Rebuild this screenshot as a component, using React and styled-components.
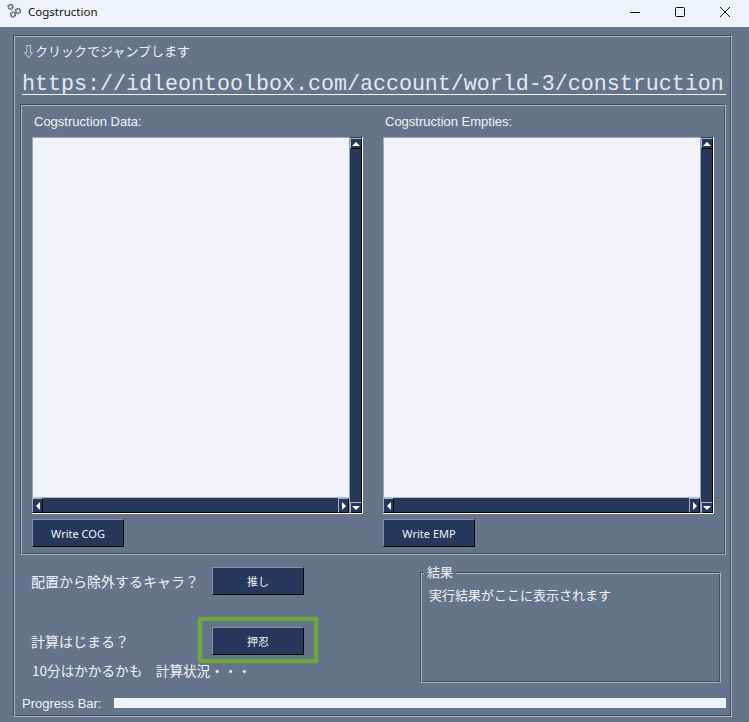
import styled, { createGlobalStyle } from "styled-components";

const SLATE = "#64758b";
const NAVY = "#25375a";
const PAPER = "#f1f3f9";
const EDGE_DARK = "#3f4c5e";
const EDGE_LIGHT = "#a9b3c1";

const GlobalStyle = createGlobalStyle`
  html, body {
    margin: 0;
    padding: 0;
    height: 100%;
    overflow: hidden;
  }
  #root {
    height: 100%;
  }
  * {
    box-sizing: border-box;
  }
`;

const Window = styled.div`
  display: flex;
  flex-direction: column;
  width: 749px;
  height: 722px;
  background: ${SLATE};
  color: ${PAPER};
  font-family: "Noto Sans CJK JP", "Noto Sans", sans-serif;
`;

const TitleBar = styled.div`
  display: flex;
  align-items: center;
  flex: none;
  height: 27px;
  padding: 0 2px 4px 6px;
  background: #f0f2f9;
  color: #111;
  font-family: "Noto Sans", sans-serif;
  font-size: 11.5px;
`;

const TitleText = styled.span`
  margin-left: 6px;
`;

const WindowControls = styled.div`
  display: flex;
  margin-left: auto;
`;

const WindowControl = styled.div`
  display: flex;
  align-items: center;
  justify-content: center;
  width: 45px;
  height: 22px;
`;

const Body = styled.div`
  flex: 1;
  display: flex;
  padding: 8px 17px 5px 13px;
`;

const Groove = styled.div`
  border-style: solid;
  border-width: 1px;
  border-color: ${EDGE_LIGHT};
  border-top-color: ${EDGE_DARK};
  border-left-color: ${EDGE_DARK};
  box-shadow: inset 1px 1px 0 ${EDGE_LIGHT}, inset -1px -1px 0 ${EDGE_DARK};
`;

const OuterFrame = styled(Groove)`
  flex: 1;
  display: flex;
  flex-direction: column;
  padding: 2px 5px 0 6px;
`;

const JumpHint = styled.div`
  height: 18px;
  margin-top: 4px;
  margin-left: 2px;
  font-size: 13px;
  line-height: 18px;
  white-space: nowrap;
`;

const JumpLink = styled.a`
  display: block;
  height: 30px;
  margin-top: 5px;
  margin-left: 2px;
  border-bottom: 1px solid ${PAPER};
  color: #e4e8f0;
  font-family: "Liberation Mono", monospace;
  font-size: 21.67px;
  line-height: 39px;
  white-space: nowrap;
  text-decoration: none;
`;

const DataFrame = styled(Groove)`
  display: grid;
  grid-template-columns: 331px 331px;
  column-gap: 20px;
  height: 451px;
  margin-top: 9px;
  padding: 0 0 0 11px;
`;

const DataColumn = styled.div`
  display: flex;
  flex-direction: column;
`;

const FieldLabel = styled.label`
  height: 32px;
  padding-left: 2px;
  font-family: "Liberation Sans", sans-serif;
  font-size: 13px;
  line-height: 34px;
`;

const ScrollBox = styled.div`
  display: grid;
  grid-template-columns: 317px 14px;
  grid-template-rows: 361px 16px;
`;

const Editor = styled.textarea`
  display: block;
  width: 317px;
  height: 361px;
  padding: 2px;
  border: none;
  border-top: 1px solid #9ea7b4;
  border-left: 1px solid #9ea7b4;
  border-bottom: 1px solid #b8bec9;
  border-radius: 0;
  background: ${PAPER};
  resize: none;
  overflow: hidden;
  outline: none;
`;

const VerticalBar = styled.div`
  grid-column: 2;
  grid-row: 1 / span 2;
  display: flex;
  flex-direction: column;
  padding-top: 1px;
  background: ${NAVY};
  border-right: 1px solid #fff;
  border-bottom: 1px solid #fff;
  border-left: 1px solid #98a2b1;
  box-shadow: inset -1px 0 0 #000, inset 0 -1px 0 #000;
`;

const HorizontalBar = styled.div`
  grid-column: 1;
  grid-row: 2;
  display: flex;
  background: ${NAVY};
  border-bottom: 1px solid #fff;
  box-shadow: inset 0 -1px 0 #000;
`;

const BarTrack = styled.div`
  flex: 1;
`;

const ArrowButton = styled.div`
  display: flex;
  align-items: center;
  justify-content: center;
  flex: none;
  width: ${(p) => (p.$wide ? 11 : 12)}px;
  height: ${(p) => (p.$wide ? 15 : 11)}px;
  background: ${NAVY};
  border: 1px solid ${EDGE_LIGHT};
  border-right-color: #000;
  border-bottom-color: #000;
`;

const Arrow = styled.div`
  width: 0;
  height: 0;
  border-style: solid;
  border-color: transparent;
  ${(p) => p.$dir === "up" && `border-width: 0 4px 4px; border-bottom-color: #fff;`}
  ${(p) => p.$dir === "down" && `border-width: 4px 4px 0; border-top-color: #fff;`}
  ${(p) => p.$dir === "left" && `border-width: 4px 4px 4px 0; border-right-color: #fff;`}
  ${(p) => p.$dir === "right" && `border-width: 4px 0 4px 4px; border-left-color: #fff;`}
`;

const ActionButton = styled.button`
  display: block;
  width: 92px;
  height: 28px;
  padding: 0;
  background: ${NAVY};
  color: ${PAPER};
  border: 1px solid #8490a3;
  border-right-color: #000;
  border-bottom-color: #000;
  border-radius: 0;
  font-family: "Noto Sans", "Noto Sans CJK JP", sans-serif;
  font-size: 11px;
`;

const WriteButton = styled(ActionButton)`
  margin-top: 5px;
`;

const LowerSection = styled.div`
  display: flex;
  justify-content: space-between;
  padding: 0 5px 0 11px;
`;

const Controls = styled.div`
  display: flex;
  flex-direction: column;
  padding-top: 12px;
`;

const ControlRow = styled.div`
  display: grid;
  grid-template-columns: 181px 92px;
  align-items: center;
  margin-bottom: ${(p) => p.$gap}px;
  font-size: 14px;
  white-space: nowrap;
`;

const Highlighted = styled.div`
  position: relative;
`;

const HighlightRing = styled.div`
  position: absolute;
  top: -10px;
  right: -14px;
  bottom: -8px;
  left: -14px;
  border: 4px solid #70a63c;
  box-shadow: 0 0 1px #70a63c, inset 0 0 1px #70a63c;
  pointer-events: none;
`;

const StatusLine = styled.div`
  height: 18px;
  margin-top: 6px;
  margin-left: 1px;
  font-size: 13.6px;
  line-height: 18px;
  white-space: pre;
`;

const ResultFrame = styled(Groove)`
  position: relative;
  width: 301px;
  height: 111px;
  margin-top: 17px;
  padding: 12px 8px;
  font-size: 13px;
  line-height: 20px;
`;

const ResultLegend = styled.span`
  position: absolute;
  top: -9px;
  left: 3px;
  padding: 0 3px;
  background: ${SLATE};
  font-size: 13px;
  line-height: 16px;
`;

const ProgressRow = styled.div`
  display: flex;
  align-items: center;
  height: 10px;
  margin-top: 15px;
  margin-left: 2px;
`;

const ProgressLabel = styled.span`
  width: 92px;
  font-family: "Liberation Sans", sans-serif;
  font-size: 13px;
  white-space: nowrap;
`;

const ProgressTrack = styled.div`
  width: 612px;
  height: 10px;
  background: ${PAPER};
`;

function GearsIcon() {
  return (
    <svg width="16" height="16" viewBox="0 0 16 16" fill="none" stroke="#5c5c5c" strokeWidth="1.8">
      <circle cx="4.5" cy="2.8" r="2.3" strokeDasharray="1.6 0.5" />
      <circle cx="7" cy="10.5" r="2.3" strokeDasharray="1.6 0.5" />
      <circle cx="12" cy="7" r="2.3" strokeDasharray="1.6 0.5" />
    </svg>
  );
}

function ScrollEditor({ label }) {
  return (
    <DataColumn>
      <FieldLabel>{label}</FieldLabel>
      <ScrollBox>
        <Editor aria-label={label} />
        <VerticalBar>
          <ArrowButton><Arrow $dir="up" /></ArrowButton>
          <BarTrack />
          <ArrowButton><Arrow $dir="down" /></ArrowButton>
        </VerticalBar>
        <HorizontalBar>
          <ArrowButton $wide><Arrow $dir="left" /></ArrowButton>
          <BarTrack />
          <ArrowButton $wide><Arrow $dir="right" /></ArrowButton>
        </HorizontalBar>
      </ScrollBox>
    </DataColumn>
  );
}

export default function App() {
  return (
    <Window>
      <GlobalStyle />
      <TitleBar>
        <GearsIcon />
        <TitleText>Cogstruction</TitleText>
        <WindowControls>
          <WindowControl>
            <svg width="10" height="10" viewBox="0 0 10 10" stroke="#111">
              <path d="M0 5.5h10" />
            </svg>
          </WindowControl>
          <WindowControl>
            <svg width="10" height="10" viewBox="0 0 10 10" stroke="#111" fill="none">
              <rect x="0.5" y="0.5" width="9" height="9" rx="1" />
            </svg>
          </WindowControl>
          <WindowControl>
            <svg width="10" height="10" viewBox="0 0 10 10" stroke="#111">
              <path d="M0 0l10 10M10 0L0 10" />
            </svg>
          </WindowControl>
        </WindowControls>
      </TitleBar>
      <Body>
        <OuterFrame>
          <JumpHint>⇩クリックでジャンプします</JumpHint>
          <JumpLink href="#">https://idleontoolbox.com/account/world-3/construction</JumpLink>
          <DataFrame>
            <DataColumn>
              <ScrollEditor label="Cogstruction Data:" />
              <WriteButton>Write COG</WriteButton>
            </DataColumn>
            <DataColumn>
              <ScrollEditor label="Cogstruction Empties:" />
              <WriteButton>Write EMP</WriteButton>
            </DataColumn>
          </DataFrame>
          <LowerSection>
            <Controls>
              <ControlRow $gap={32}>
                <span>配置から除外するキャラ？</span>
                <ActionButton>推し</ActionButton>
              </ControlRow>
              <ControlRow $gap={0}>
                <span>計算はじまる？</span>
                <Highlighted>
                  <ActionButton>押忍</ActionButton>
                  <HighlightRing />
                </Highlighted>
              </ControlRow>
              <StatusLine>10分はかかるかも　計算状況・・・</StatusLine>
            </Controls>
            <ResultFrame>
              <ResultLegend>結果</ResultLegend>
              実行結果がここに表示されます
            </ResultFrame>
          </LowerSection>
          <ProgressRow>
            <ProgressLabel>Progress Bar:</ProgressLabel>
            <ProgressTrack />
          </ProgressRow>
        </OuterFrame>
      </Body>
    </Window>
  );
}
